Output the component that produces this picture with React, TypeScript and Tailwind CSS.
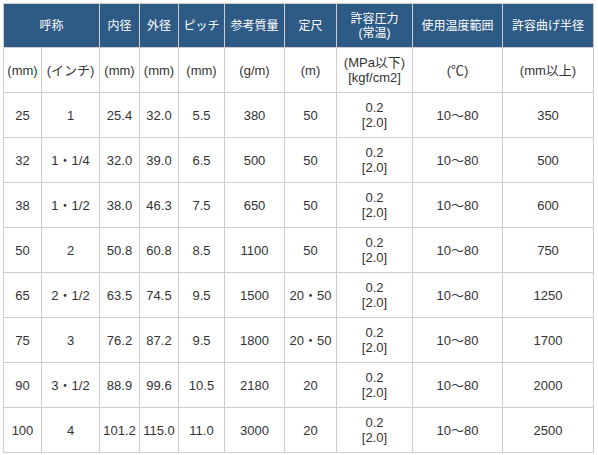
const ROWS = [
  ["25", "1", "25.4", "32.0", "5.5", "380", "50", "350"],
  ["32", "1・1/4", "32.0", "39.0", "6.5", "500", "50", "500"],
  ["38", "1・1/2", "38.0", "46.3", "7.5", "650", "50", "600"],
  ["50", "2", "50.8", "60.8", "8.5", "1100", "50", "750"],
  ["65", "2・1/2", "63.5", "74.5", "9.5", "1500", "20・50", "1250"],
  ["75", "3", "76.2", "87.2", "9.5", "1800", "20・50", "1700"],
  ["90", "3・1/2", "88.9", "99.6", "10.5", "2180", "20", "2000"],
  ["100", "4", "101.2", "115.0", "11.0", "3000", "20", "2500"],
];

const WIDTHS = [38, 58, 40, 39, 46, 60, 52, 76, 90, 91];

const th = "border border-[#cfcccb] bg-[#2e5b86] text-white font-normal text-[12px] leading-[14px] text-center align-middle p-0";
const td = "border border-[#cfcccb] text-center align-middle p-0 leading-[15px]";

export default function App() {
  return (
    <div className="p-[3px] bg-white text-[#333] text-[13px] [font-family:'Liberation_Sans',Arial,'Noto_Sans_CJK_JP',sans-serif]">
      <table className="table-fixed border-collapse w-[591px]">
        <colgroup>
          {WIDTHS.map((w, i) => (
            <col key={i} style={{ width: w }} />
          ))}
        </colgroup>
        <thead>
          <tr className="h-[44px]">
            <th colSpan={2} className={th}>呼称</th>
            <th className={th}>内径</th>
            <th className={th}>外径</th>
            <th className={th}>ピッチ</th>
            <th className={th}>参考質量</th>
            <th className={th}>定尺</th>
            <th className={th}>
              許容圧力
              <br />
              (常温)
            </th>
            <th className={th}>使用温度範囲</th>
            <th className={th}>許容曲げ半径</th>
          </tr>
        </thead>
        <tbody>
          <tr className="h-[45px]">
            <td className={td}>(mm)</td>
            <td className={td}>(インチ)</td>
            <td className={td}>(mm)</td>
            <td className={td}>(mm)</td>
            <td className={td}>(mm)</td>
            <td className={td}>(g/m)</td>
            <td className={td}>(m)</td>
            <td className={td}>
              (MPa以下)
              <br />
              [kgf/cm2]
            </td>
            <td className={td}>(℃)</td>
            <td className={td}>(mm以上)</td>
          </tr>
          {ROWS.map((r) => (
            <tr key={r[0]} className="h-[45px]">
              {r.slice(0, 7).map((v, i) => (
                <td key={i} className={td}>{v}</td>
              ))}
              <td className={td}>
                0.2
                <br />
                [2.0]
              </td>
              <td className={td}>10〜80</td>
              <td className={td}>{r[7]}</td>
            </tr>
          ))}
        </tbody>
      </table>
    </div>
  );
}
